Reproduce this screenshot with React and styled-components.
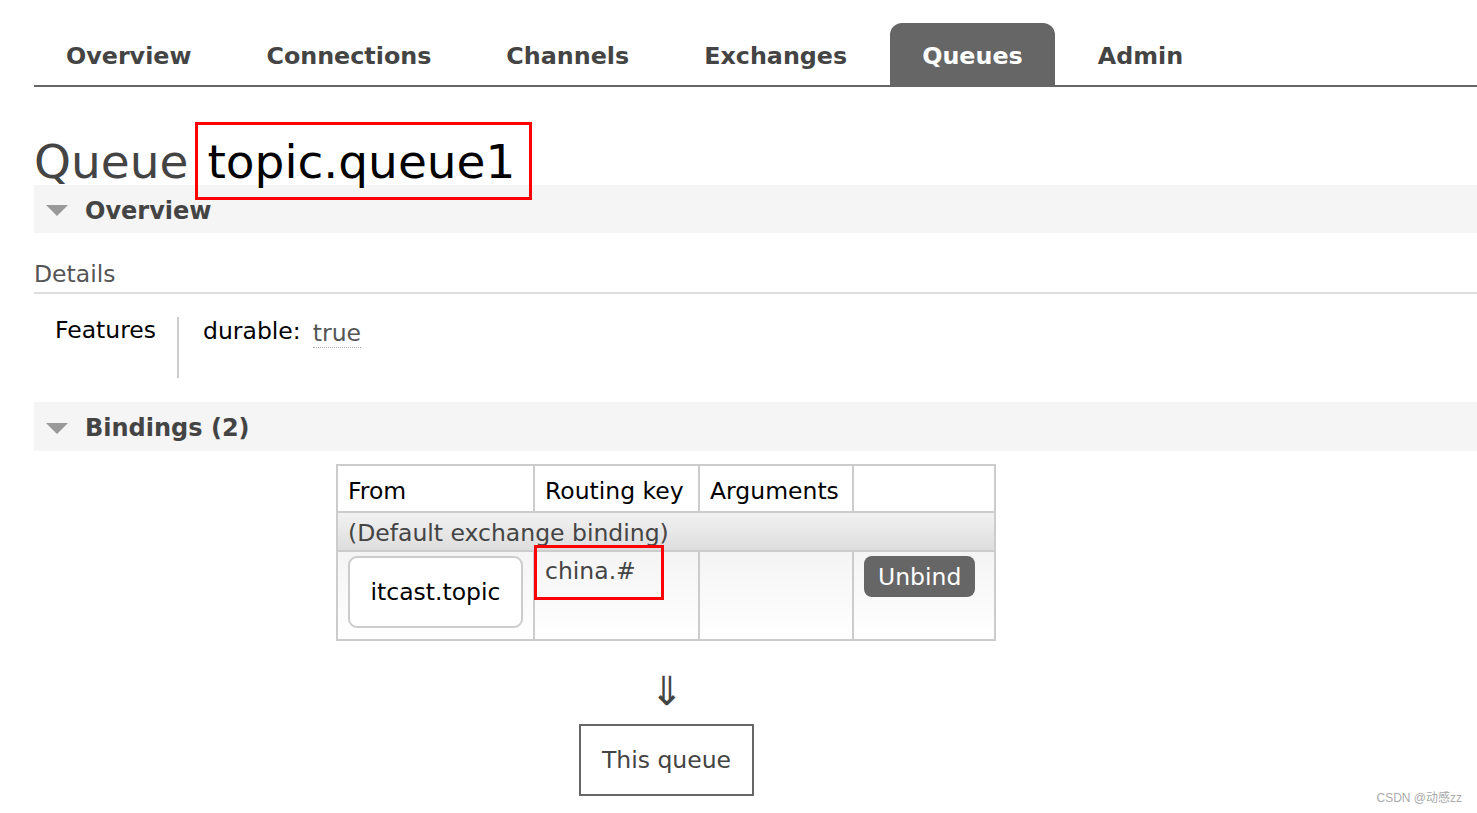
import styled, { createGlobalStyle } from "styled-components"

const GlobalStyle = createGlobalStyle`
    html, body {
        margin: 0;
        padding: 0;
        background: #fff;
    }
    body {
        font-family: "DejaVu Sans", Verdana, sans-serif;
        font-size: 23.5px;
        color: #000;
    }
`

const Page = styled.div`
    position: relative;
    width: 1477px;
    height: 813px;
    padding-left: 34px;
    box-sizing: border-box;
    overflow: hidden;
`

const Tabs = styled.nav`
    display: flex;
    align-items: flex-end;
    height: 85px;
    border-bottom: 2px solid #666;
`

const Tab = styled.a`
    display: flex;
    align-items: center;
    height: 62px;
    padding: 3px 32px 0;
    box-sizing: border-box;
    margin-right: 11px;
    border-radius: 12px 12px 0 0;
    font-size: 23.8px;
    font-weight: bold;
    color: ${(p) => (p.$active ? "#fff" : "#444")};
    background: ${(p) => (p.$active ? "#666" : "transparent")};
    text-decoration: none;
`

const Title = styled.h1`
    margin: 51px 0 0;
    font-size: 47px;
    line-height: 47px;
    font-weight: normal;
    color: #444;
    white-space: nowrap;
`

const Marked = styled.span`
    margin-left: 7px;
    padding: 9px 14px 8px 9px;
    border: 3px solid #ff0000;
    color: #000;
`

const SectionHeader = styled.h2`
    display: flex;
    align-items: center;
    height: ${(p) => p.$h}px;
    box-sizing: border-box;
    margin: ${(p) => p.$top}px 0 0;
    padding: 3px 0 0 12px;
    background: #f5f5f5;
    font-size: 24px;
    font-weight: bold;
    color: #444;
`

const Triangle = styled.span`
    width: 0;
    height: 0;
    margin-right: 17px;
    border-left: 11px solid transparent;
    border-right: 11px solid transparent;
    border-top: 11px solid #999;
`

const SubHeading = styled.h3`
    margin: 27px 0 0;
    padding-bottom: 4px;
    line-height: 28px;
    font-size: 23.5px;
    font-weight: normal;
    color: #555;
    border-bottom: 2px solid #ddd;
`

const FactsRow = styled.div`
    display: flex;
    margin-top: 23px;
    height: 61px;
`

const FactLabel = styled.div`
    padding: 0 21px;
    line-height: 28px;
    margin-top: -1px;
`

const FactValue = styled.div`
    border-left: 2px solid #ccc;
    padding-left: 24px;
    line-height: 28px;
`

const Key = styled.span`
    margin-right: 12px;
`

const Hint = styled.span`
    color: #555;
    border-bottom: 1px dotted #aaa;
    position: relative;
    top: 2px;
`

const BindingsArea = styled.div`
    display: inline-flex;
    flex-direction: column;
    align-items: center;
    margin: 13px 0 0 303px;
`

const Table = styled.table`
    border-collapse: collapse;
    border: 2px solid #ccc;
    font-size: 23.5px;
    margin-left: -1px;
`

const Th = styled.th`
    width: ${(p) => p.$w}px;
    height: 47px;
    padding: 4px 10px 0;
    box-sizing: border-box;
    border: 2px solid #ccc;
    text-align: left;
    font-weight: normal;
    color: #000;
    background: #fff;
`

const GroupRow = styled.tr`
    background: linear-gradient(#f2f2f2, #dddddd);
`

const GroupCell = styled.td`
    height: 39px;
    box-sizing: border-box;
    padding: 3px 10px 0;
    color: #444;
    border: 2px solid #ccc;
`

const DataRow = styled.tr`
    background: linear-gradient(#f4f4f4, #ffffff);
`

const Td = styled.td`
    height: 89px;
    padding: ${(p) => p.$pad || "5px 10px"};
    vertical-align: top;
    border: 2px solid #ccc;
    box-sizing: border-box;
    color: #444;
`

const ExchangeBox = styled.div`
    display: flex;
    align-items: center;
    justify-content: center;
    height: 72px;
    box-sizing: border-box;
    border: 2px solid #ccc;
    border-radius: 9px;
    background: #fff;
    color: #000;
`

const RoutingKey = styled.span`
    display: inline-block;
    margin: -12px 0 0 -11px;
    padding: 9px 25px 12px 8px;
    border: 3px solid #ff0000;
    line-height: 28px;
`

const Button = styled.button`
    height: 41px;
    padding: 0 14px;
    border: none;
    border-radius: 8px;
    background: #666;
    color: #fff;
    font-family: inherit;
    font-size: 23.5px;
`

const Arrow = styled.div`
    margin-top: 27px;
    font-size: 40px;
    line-height: 46px;
    color: #444;
`

const QueueBox = styled.div`
    margin-top: 10px;
    width: 175px;
    height: 72px;
    box-sizing: border-box;
    border: 2px solid #666;
    display: flex;
    align-items: center;
    justify-content: center;
    color: #444;
`

const Watermark = styled.div`
    position: absolute;
    right: 15px;
    bottom: 8px;
    font-family: "Liberation Sans", "Noto Sans CJK SC", sans-serif;
    font-size: 12px;
    color: #aaa;
`

const tabs = ["Overview", "Connections", "Channels", "Exchanges", "Queues", "Admin"]

function App() {
    return (
        <Page>
            <GlobalStyle />
            <Tabs>
                {tabs.map((t) => (
                    <Tab key={t} $active={t === "Queues"}>
                        {t}
                    </Tab>
                ))}
            </Tabs>
            <Title>
                Queue<Marked>topic.queue1</Marked>
            </Title>
            <SectionHeader $h={48} $top={0}>
                <Triangle />
                Overview
            </SectionHeader>
            <SubHeading>Details</SubHeading>
            <FactsRow>
                <FactLabel>Features</FactLabel>
                <FactValue>
                    <Key>durable:</Key>
                    <Hint>true</Hint>
                </FactValue>
            </FactsRow>
            <SectionHeader $h={49} $top={24}>
                <Triangle />
                Bindings (2)
            </SectionHeader>
            <BindingsArea>
                <Table>
                    <thead>
                        <tr>
                            <Th $w={197}>From</Th>
                            <Th $w={165}>Routing key</Th>
                            <Th $w={154}>Arguments</Th>
                            <Th $w={142}></Th>
                        </tr>
                    </thead>
                    <tbody>
                        <GroupRow>
                            <GroupCell colSpan={4}>(Default exchange binding)</GroupCell>
                        </GroupRow>
                        <DataRow>
                            <Td $pad="4px 10px">
                                <ExchangeBox>itcast.topic</ExchangeBox>
                            </Td>
                            <Td $pad="5px 10px">
                                <RoutingKey>china.#</RoutingKey>
                            </Td>
                            <Td />
                            <Td $pad="4px 10px">
                                <Button>Unbind</Button>
                            </Td>
                        </DataRow>
                    </tbody>
                </Table>
                <Arrow>⇓</Arrow>
                <QueueBox>This queue</QueueBox>
            </BindingsArea>
            <Watermark>CSDN @动感zz</Watermark>
        </Page>
    )
}

export default App
